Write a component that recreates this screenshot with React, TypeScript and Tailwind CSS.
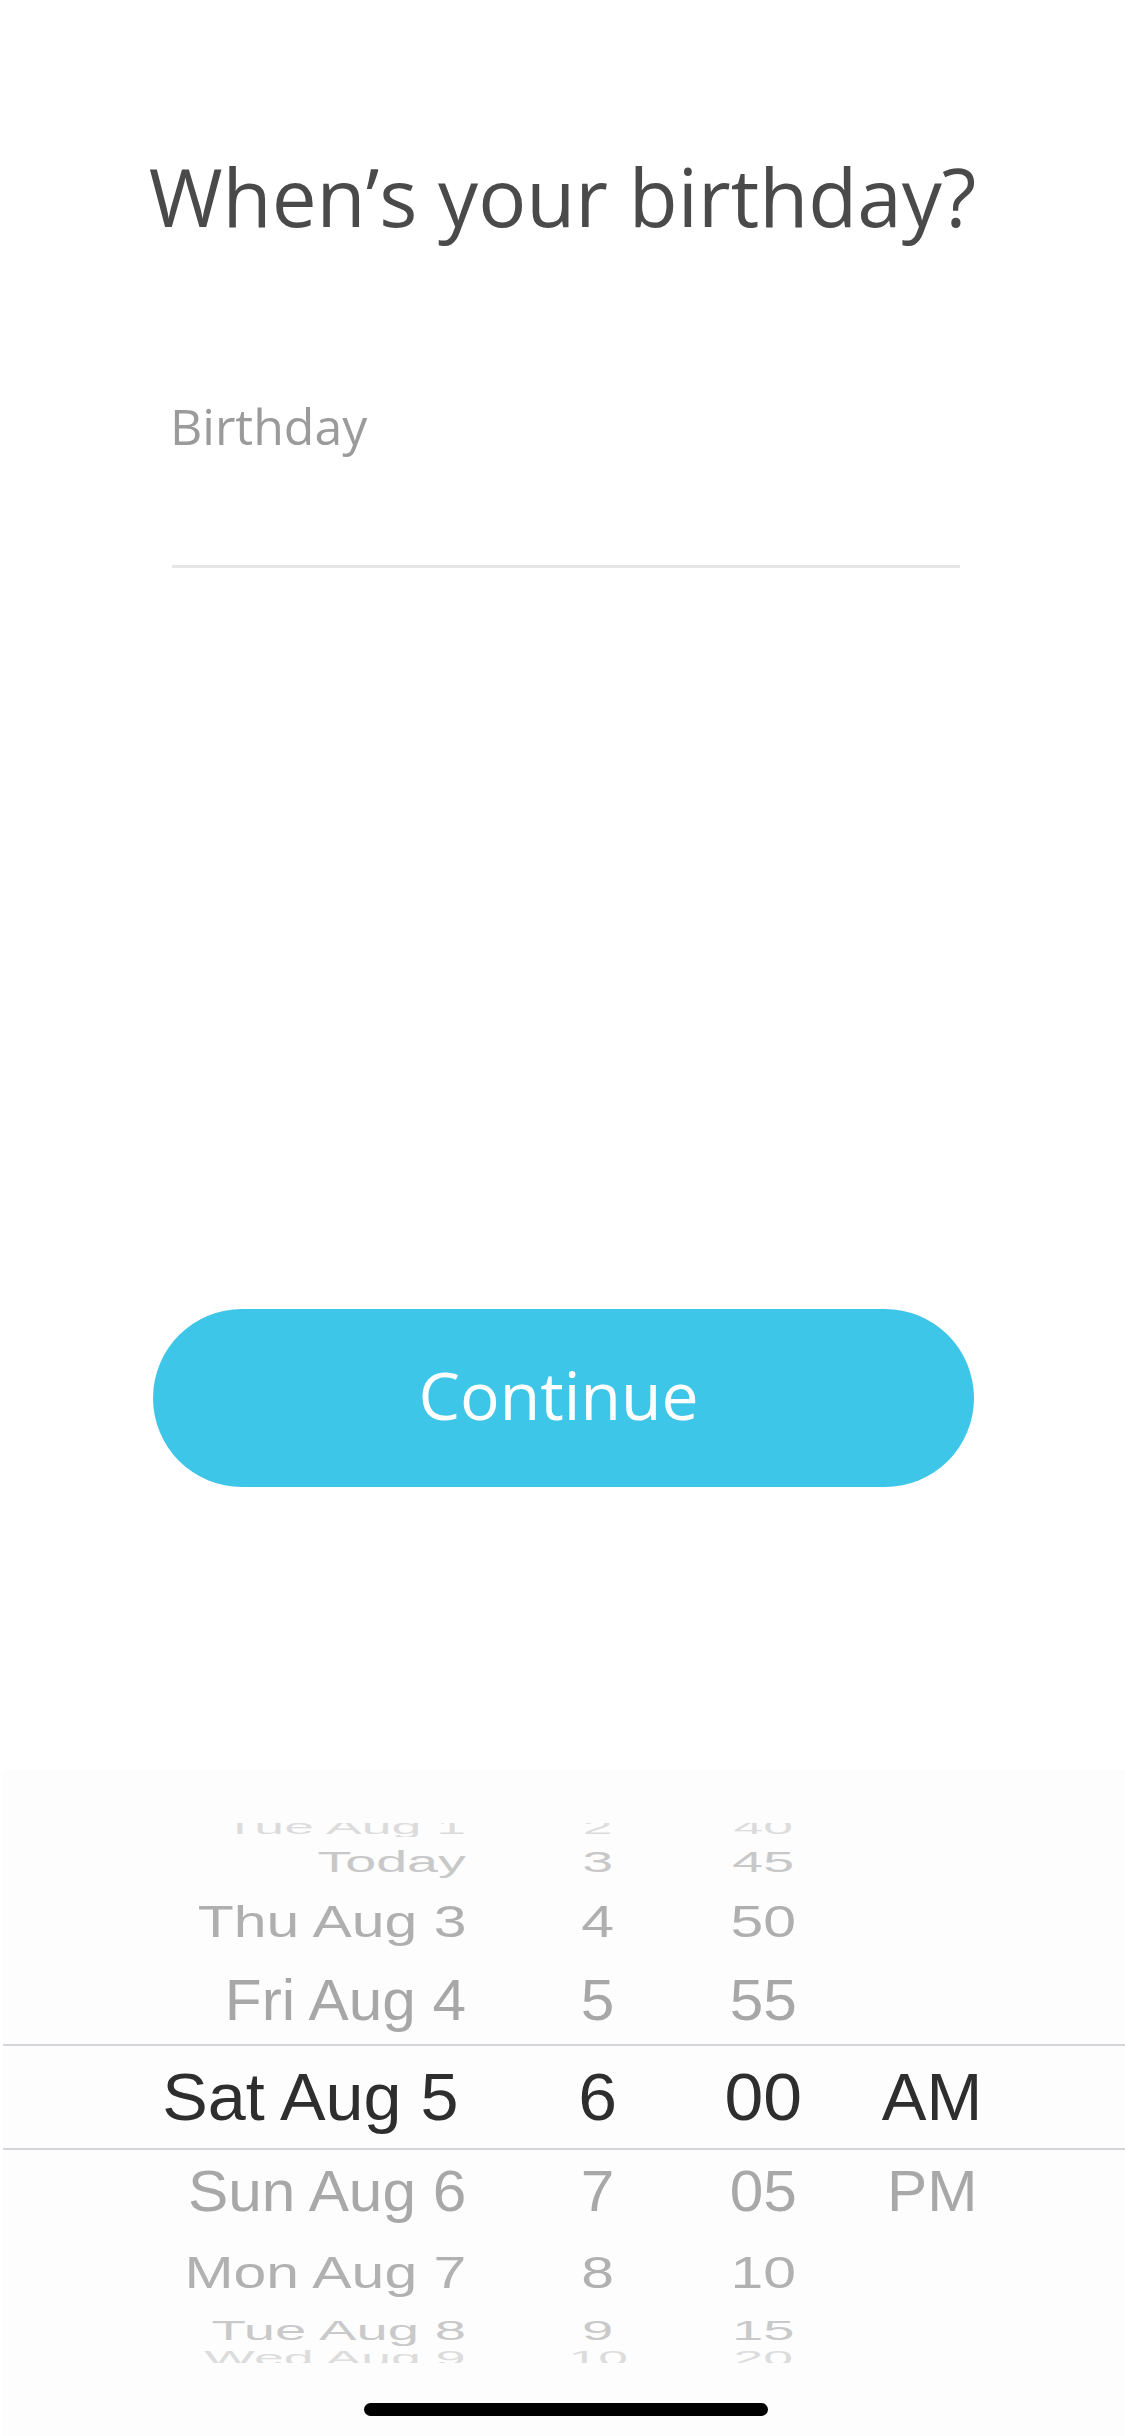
import React from "react";

type Row = {
  date: string;
  hour: string;
  minute: string;
  ampm?: string;
  box: string;
  text: string;
  dateText: string;
};

const topRows: Row[] = [
  {
    date: "Tue Aug 1",
    hour: "2",
    minute: "40",
    box: "h-[14px] items-end overflow-hidden",
    text: "scale-x-[0.8] scale-y-[0.3] text-[#dcdcdc] origin-bottom",
    dateText: "scale-x-[0.8] scale-y-[0.3] text-[#dcdcdc] origin-bottom-right",
  },
  {
    date: "Today",
    hour: "3",
    minute: "45",
    box: "h-[50px] items-center",
    text: "scale-x-[0.83] scale-y-[0.44] text-[#c8c8c8] origin-center",
    dateText: "scale-x-[0.83] scale-y-[0.44] text-[#c8c8c8] origin-right",
  },
  {
    date: "Thu Aug 3",
    hour: "4",
    minute: "50",
    box: "h-[69px] items-center",
    text: "scale-x-[0.88] scale-y-[0.67] text-[#afafaf] origin-center",
    dateText: "scale-x-[0.88] scale-y-[0.67] text-[#afafaf] origin-right",
  },
  {
    date: "Fri Aug 4",
    hour: "5",
    minute: "55",
    box: "h-[88px] items-center",
    text: "scale-x-[0.9] scale-y-[0.86] text-[#a7a7a7] origin-center",
    dateText: "scale-x-[0.9] scale-y-[0.86] text-[#a7a7a7] origin-right",
  },
];

const bottomRows: Row[] = [
  {
    date: "Sun Aug 6",
    hour: "7",
    minute: "05",
    ampm: "PM",
    box: "h-[82px] items-center",
    text: "scale-x-[0.9] scale-y-[0.86] text-[#a8a8a8] origin-center",
    dateText: "scale-x-[0.9] scale-y-[0.86] text-[#a8a8a8] origin-right",
  },
  {
    date: "Mon Aug 7",
    hour: "8",
    minute: "10",
    box: "h-[82px] items-center",
    text: "scale-x-[0.88] scale-y-[0.65] text-[#b1b1b1] origin-center",
    dateText: "scale-x-[0.88] scale-y-[0.65] text-[#b1b1b1] origin-right",
  },
  {
    date: "Tue Aug 8",
    hour: "9",
    minute: "15",
    box: "h-[34px] items-center",
    text: "scale-x-[0.84] scale-y-[0.42] text-[#c9c9c9] origin-center",
    dateText: "scale-x-[0.84] scale-y-[0.42] text-[#c9c9c9] origin-right",
  },
  {
    date: "Wed Aug 9",
    hour: "10",
    minute: "20",
    box: "h-[15px] items-start overflow-hidden",
    text: "scale-x-[0.8] scale-y-[0.3] text-[#dcdcdc] origin-top",
    dateText: "scale-x-[0.8] scale-y-[0.3] text-[#dcdcdc] origin-top-right",
  },
];

function PickerRow({ row }: { row: Row }) {
  return (
    <div className={`flex ${row.box}`}>
      <div className="w-[463px] flex justify-end">
        <span className={`block whitespace-nowrap ${row.dateText}`}>{row.date}</span>
      </div>
      <div className="ml-[72px] w-[120px] flex justify-center">
        <span className={`block ${row.text}`}>{row.hour}</span>
      </div>
      <div className="ml-[45px] w-[120px] flex justify-center">
        <span className={`block ${row.text}`}>{row.minute}</span>
      </div>
      <div className="ml-[49px] w-[120px] flex justify-center">
        {row.ampm ? <span className={`block ${row.text}`}>{row.ampm}</span> : null}
      </div>
    </div>
  );
}

export default function App() {
  return (
    <div className="w-[1125px] h-[2436px] bg-white flex flex-col overflow-hidden font-['Open_Sans',sans-serif]">
      <h1 className="pt-[156px] text-center text-[80px] leading-none font-normal text-[#4a4a4a]">
        When’s your birthday?
      </h1>

      <div className="ml-[170px] w-[790px] mt-[165px] flex flex-col">
        <div className="text-[50px] leading-none text-[#9b9b9b]">Birthday</div>
        <div className="mt-[114px] ml-[2px] h-[3px] bg-[#e6e6e6]" />
      </div>

      <button className="mt-[741px] ml-[153px] w-[821px] h-[178px] rounded-full bg-[#3ec6e8] flex items-center justify-center pr-[10px] pb-[8px] text-white text-[66px] leading-none font-normal">
        Continue
      </button>

      <div className="mt-[283px] ml-[3px] h-[667px] bg-[#fdfdfe] flex flex-col pt-[53px] font-['Liberation_Sans',Arial,sans-serif] text-[67px] leading-none">
        {topRows.map((r) => (
          <PickerRow key={r.date} row={r} />
        ))}
        <div className="h-[106px] border-y-2 border-[#d5d5d9] flex items-center text-[#2e2e2e]">
          <div className="w-[456px] flex justify-end">
            <span className="block whitespace-nowrap scale-x-[1.02] origin-right">Sat Aug 5</span>
          </div>
          <div className="ml-[79px] w-[120px] flex justify-center">
            <span className="block scale-x-[1.04]">6</span>
          </div>
          <div className="ml-[45px] w-[120px] flex justify-center">
            <span className="block scale-x-[1.04]">00</span>
          </div>
          <div className="ml-[49px] w-[120px] flex justify-center">
            <span className="block">AM</span>
          </div>
        </div>
        {bottomRows.map((r) => (
          <PickerRow key={r.date} row={r} />
        ))}
        <div className="mt-[40px] ml-[361px] w-[404px] h-[13px] rounded-full bg-black" />
      </div>
    </div>
  );
}
